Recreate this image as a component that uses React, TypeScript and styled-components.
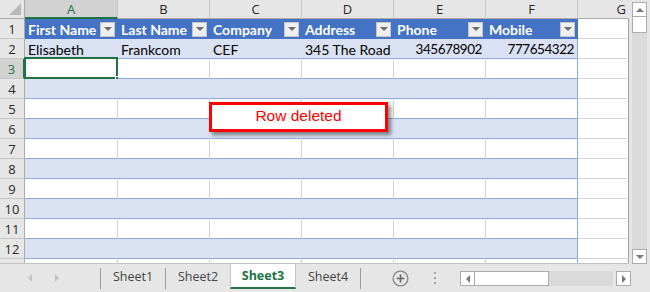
import styled, { createGlobalStyle, css } from 'styled-components';

const GlobalStyle = createGlobalStyle`
  html, body {
    margin: 0;
    padding: 0;
    background: #ffffff;
  }
  body {
    width: 650px;
    height: 292px;
    overflow: hidden;
  }
`;

const GREEN = '#217346';
const BLUE = '#4472c4';
const BAND = '#d9e1f2';
const LINE = '#8ea9db';
const GRID = '#d4d4d4';

const Workbook = styled.div`
  position: relative;
  width: 650px;
  height: 292px;
  display: flex;
  flex-direction: column;
  background: #e6e6e6;
  font-family: Lato, 'Open Sans', sans-serif;
`;

const Top = styled.div`
  display: flex;
  height: 264px;
`;

const Sheet = styled.div`
  width: 629px;
  height: 264px;
  box-sizing: border-box;
  border-bottom: 1px solid #c3c3c3;
  overflow: hidden;
  display: grid;
  grid-template-columns: 25px 93px repeat(5, 92px) 51px;
  grid-template-rows: 19px repeat(13, 20px);
  background: #ffffff;
`;

const Corner = styled.div`
  background: #e6e6e6;
  border-right: 1px solid #ababab;
  border-bottom: 1px solid #ababab;
  box-sizing: border-box;
  display: flex;
  align-items: flex-end;
  justify-content: flex-end;
  padding: 0 3px 3px 0;
`;

const ColHead = styled.div<{ $active?: boolean; $edge?: boolean }>`
  box-sizing: border-box;
  background: ${(p) => (p.$active ? '#d2d2d2' : '#e6e6e6')};
  border-right: 1px solid ${(p) => (p.$edge ? '#e6e6e6' : '#c6c6c6')};
  border-bottom: ${(p) => (p.$active ? `2px solid ${GREEN}` : '1px solid #ababab')};
  color: ${(p) => (p.$active ? GREEN : '#262626')};
  font-family: 'Open Sans', 'Noto Sans', sans-serif;
  font-size: 13px;
  display: flex;
  align-items: center;
  justify-content: ${(p) => (p.$edge ? 'flex-end' : 'center')};
  padding-right: ${(p) => (p.$edge ? '2px' : '0')};
`;

const RowHead = styled.div<{ $active?: boolean }>`
  box-sizing: border-box;
  background: ${(p) => (p.$active ? '#d2d2d2' : '#e6e6e6')};
  border-right: ${(p) => (p.$active ? `2px solid ${GREEN}` : '1px solid #ababab')};
  border-bottom: 1px solid #c6c6c6;
  color: ${(p) => (p.$active ? GREEN : '#262626')};
  font-family: 'Open Sans', 'Noto Sans', sans-serif;
  font-size: 13px;
  display: flex;
  align-items: center;
  justify-content: center;
`;

type Kind = 'head' | 'band' | 'plain' | 'outside';

const kindStyles = {
  head: css`
    background: ${BLUE};
    color: #ffffff;
    font-weight: 700;
    border-right-color: ${BLUE};
    border-bottom-color: ${BLUE};
  `,
  band: css`
    background: ${BAND};
    border-right-color: ${BAND};
    border-bottom-color: ${LINE};
  `,
  plain: css`
    background: #ffffff;
    border-right-color: ${GRID};
    border-bottom-color: ${LINE};
  `,
  outside: css`
    background: #ffffff;
    border-right-color: #a0a0a0;
    border-bottom-color: ${GRID};
  `,
};

const Cell = styled.div<{ $kind: Kind; $last?: boolean; $num?: boolean; $selected?: boolean }>`
  position: relative;
  box-sizing: border-box;
  border-right: 1px solid;
  border-bottom: 1px solid;
  font-size: 14px;
  color: #000000;
  display: flex;
  align-items: center;
  justify-content: ${(p) => (p.$num ? 'flex-end' : 'space-between')};
  padding: 1px 2px 0 3px;
  white-space: nowrap;
  ${(p) => kindStyles[p.$kind]}
  ${(p) =>
    p.$num &&
    css`
      font-size: 13.5px;
      letter-spacing: -0.45px;
      padding-right: 3px;
    `}
  ${(p) =>
    p.$last &&
    p.$kind !== 'head' &&
    css`
      border-right-color: ${LINE};
    `}
  ${(p) =>
    p.$selected &&
    css`
      &::before {
        content: '';
        position: absolute;
        top: -2px;
        left: -1px;
        right: -1px;
        bottom: -1px;
        border: 2px solid ${GREEN};
      }
    `}
`;

const Handle = styled.span`
  position: absolute;
  right: -3px;
  bottom: -3px;
  width: 5px;
  height: 5px;
  background: ${GREEN};
  border: 1px solid #ffffff;
  box-sizing: border-box;
`;

const FilterButton = styled.span`
  flex: none;
  width: 15px;
  height: 15px;
  box-sizing: border-box;
  background: #efefef;
  border: 1px solid #c6c6c6;
  display: flex;
  align-items: center;
  justify-content: center;
  &::after {
    content: '';
    border-left: 4px solid transparent;
    border-right: 4px solid transparent;
    border-top: 4px solid #6a6a6a;
  }
`;

const VScroll = styled.div`
  width: 21px;
  height: 264px;
  box-sizing: border-box;
  padding: 2px 3px 0 3px;
  display: flex;
  flex-direction: column;
`;

const ArrowButton = styled.div<{ $dir: 'up' | 'down' | 'left' | 'right' }>`
  flex: none;
  width: 15px;
  height: 15px;
  box-sizing: border-box;
  background: #ffffff;
  border: 1px solid #ababab;
  display: flex;
  align-items: center;
  justify-content: center;
  &::after {
    content: '';
    ${(p) =>
      p.$dir === 'up' || p.$dir === 'down'
        ? css`
            border-left: 4px solid transparent;
            border-right: 4px solid transparent;
            border-${p.$dir === 'up' ? 'bottom' : 'top'}: 4px solid #777777;
          `
        : css`
            border-top: 4px solid transparent;
            border-bottom: 4px solid transparent;
            border-${p.$dir === 'left' ? 'right' : 'left'}: 4px solid #777777;
          `}
  }
`;

const VThumb = styled.div`
  flex: none;
  height: 16px;
  box-sizing: border-box;
  background: #ffffff;
  border: 1px solid #ababab;
  border-top: none;
`;

const Track = styled.div`
  flex: 1;
  background: #dadada;
`;

const TabBar = styled.div`
  height: 28px;
  display: flex;
  align-items: flex-start;
  font-family: 'Open Sans', 'Noto Sans', sans-serif;
  font-size: 12.5px;
  color: #444444;
`;

const Nav = styled.div`
  width: 100px;
  height: 28px;
  display: flex;
  align-items: center;
  padding-left: 28px;
  gap: 23px;
  box-sizing: border-box;
`;

const NavArrow = styled.span<{ $dir: 'left' | 'right' }>`
  width: 0;
  height: 0;
  border-top: 4px solid transparent;
  border-bottom: 4px solid transparent;
  border-${(p) => (p.$dir === 'left' ? 'right' : 'left')}: 4px solid #c4c4c4;
`;

const Sep = styled.span`
  flex: none;
  width: 1px;
  height: 21px;
  margin-top: 4px;
  background: #9a9a9a;
`;

const Tab = styled.div<{ $active?: boolean }>`
  flex: none;
  width: ${(p) => (p.$active ? '66px' : '64px')};
  height: ${(p) => (p.$active ? '25px' : '28px')};
  box-sizing: border-box;
  display: flex;
  align-items: center;
  justify-content: center;
  padding-bottom: ${(p) => (p.$active ? '0' : '3px')};
  ${(p) =>
    p.$active &&
    css`
      background: #ffffff;
      color: ${GREEN};
      font-weight: 700;
      border-left: 1px solid #c6c6c6;
      border-right: 1px solid #c6c6c6;
      border-bottom: 2px solid ${GREEN};
    `}
`;

const AddArea = styled.div`
  flex: none;
  width: 99px;
  height: 28px;
  display: flex;
  align-items: center;
  padding-left: 31px;
  box-sizing: border-box;
`;

const Dots = styled.div`
  display: flex;
  flex-direction: column;
  gap: 3px;
  margin-left: 25px;
  span {
    width: 2px;
    height: 2px;
    background: #a8a8a8;
  }
`;

const HScroll = styled.div`
  display: flex;
  align-items: center;
  height: 15px;
  margin-top: 7px;
  width: 171px;
`;

const HThumb = styled.div`
  flex: none;
  width: 74px;
  height: 15px;
  box-sizing: border-box;
  background: #ffffff;
  border: 1px solid #ababab;
  border-left: none;
`;

const HTrack = styled.div`
  flex: none;
  width: 64px;
  height: 15px;
  margin-right: 3px;
  background: #dadada;
`;

const Callout = styled.div`
  position: absolute;
  left: 209px;
  top: 102px;
  width: 179px;
  height: 30px;
  box-sizing: border-box;
  border: 3px solid #ff0000;
  background: #ffffff;
  box-shadow: 3px 3px 4px rgba(0, 0, 0, 0.45);
  color: #ff0000;
  font-family: 'Liberation Sans', Arial, sans-serif;
  font-size: 15.5px;
  display: flex;
  align-items: center;
  justify-content: center;
  padding-bottom: 2px;
`;

const columns = ['A', 'B', 'C', 'D', 'E', 'F', 'G'];
const headers = ['First Name', 'Last Name', 'Company', 'Address', 'Phone', 'Mobile'];
const firstRow = ['Elisabeth', 'Frankcom', 'CEF', '345 The Road', '345678902', '777654322'];
const numeric = [false, false, false, false, true, true];

function CornerMark() {
  return (
    <svg width="12" height="12" viewBox="0 0 12 12">
      <polygon points="12,0 12,12 0,12" fill="#b9b9b9" />
    </svg>
  );
}

function AddSheetIcon() {
  return (
    <svg width="17" height="17" viewBox="0 0 17 17">
      <circle cx="8.5" cy="8.5" r="7.4" fill="none" stroke="#858585" strokeWidth="1.3" />
      <path d="M8.5 4.6v7.8M4.6 8.5h7.8" stroke="#666666" strokeWidth="1.6" />
    </svg>
  );
}

function rowKind(r: number): Kind {
  if (r === 1) return 'head';
  return r % 2 === 0 ? 'band' : 'plain';
}

export default function App() {
  const rows = Array.from({ length: 13 }, (_, i) => i + 1);
  return (
    <Workbook>
      <GlobalStyle />
      <Top>
        <Sheet>
          <Corner>
            <CornerMark />
          </Corner>
          {columns.map((c, i) => (
            <ColHead key={c} $active={i === 0} $edge={c === 'G'}>
              {c}
            </ColHead>
          ))}
          {rows.map((r) => (
            <Row key={r} r={r} />
          ))}
        </Sheet>
        <VScroll>
          <ArrowButton $dir="up" />
          <VThumb />
          <Track />
          <ArrowButton $dir="down" />
        </VScroll>
      </Top>
      <TabBar>
        <Nav>
          <NavArrow $dir="left" />
          <NavArrow $dir="right" />
        </Nav>
        <Sep />
        <Tab>Sheet1</Tab>
        <Sep />
        <Tab>Sheet2</Tab>
        <Tab $active>Sheet3</Tab>
        <Tab>Sheet4</Tab>
        <Sep />
        <AddArea>
          <AddSheetIcon />
          <Dots>
            <span />
            <span />
            <span />
          </Dots>
        </AddArea>
        <HScroll>
          <ArrowButton $dir="left" />
          <HThumb />
          <HTrack />
          <ArrowButton $dir="right" />
        </HScroll>
      </TabBar>
      <Callout>Row deleted</Callout>
    </Workbook>
  );
}

function Row({ r }: { r: number }) {
  const kind = rowKind(r);
  // row 13 only peeks in under row 12, so its number stays out of view
  return (
    <>
      <RowHead $active={r === 3}>{r < 13 ? r : null}</RowHead>
      {headers.map((h, i) => (
        <Cell
          key={h}
          $kind={kind}
          $last={i === 5}
          $num={r === 2 && numeric[i]}
          $selected={r === 3 && i === 0}
        >
          {r === 1 && (
            <>
              <span>{h}</span>
              <FilterButton />
            </>
          )}
          {r === 2 && firstRow[i]}
          {r === 3 && i === 0 && <Handle />}
        </Cell>
      ))}
      <Cell $kind="outside" />
    </>
  );
}
